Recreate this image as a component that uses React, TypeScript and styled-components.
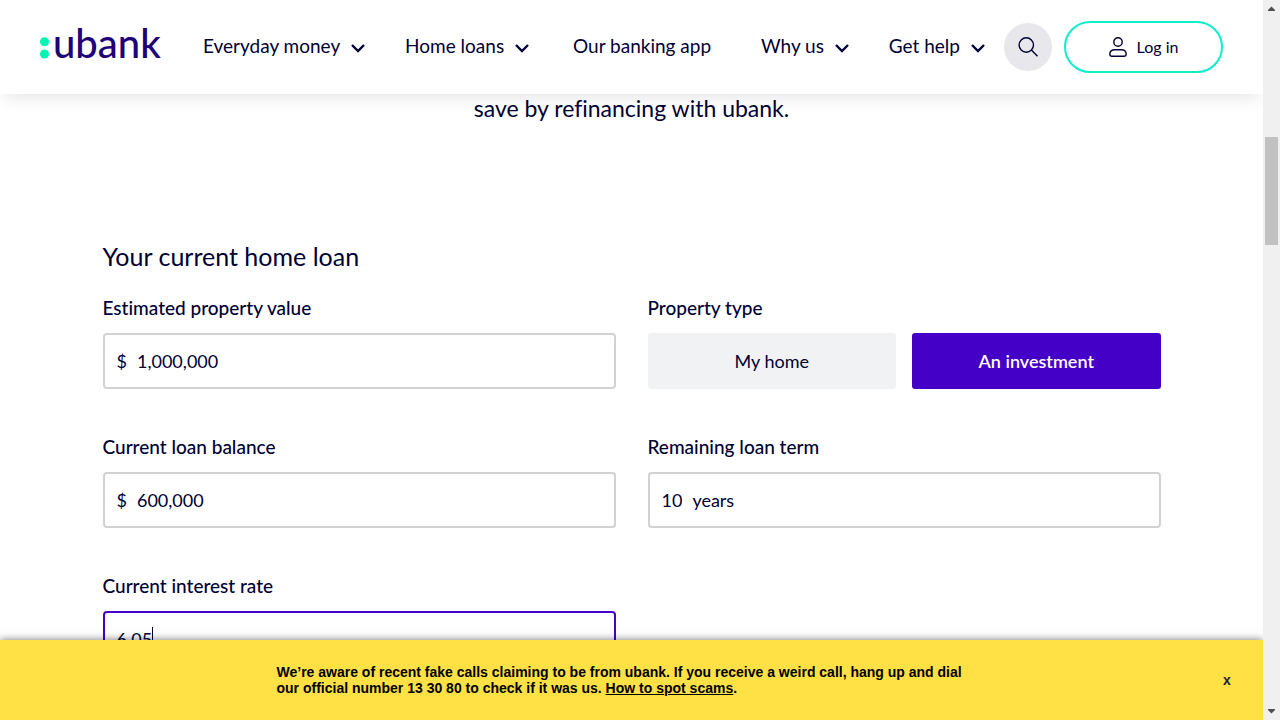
import React, { useState } from "react";
import styled, { createGlobalStyle } from "styled-components";

const ink = "#000033";
const violet = "#4500c8";
const mint = "#0eeecb";

const GlobalStyle = createGlobalStyle`
  *, *::before, *::after { box-sizing: border-box; }
  body {
    margin: 0;
    background: #fff;
    color: ${ink};
    font-family: Lato, "Open Sans", sans-serif;
    font-variant-ligatures: none;
  }
  button, input { font: inherit; color: inherit; font-variant-ligatures: none; }
`;

const Shell = styled.div`
  display: flex;
  height: 100vh;
  overflow: hidden;
`;

const Page = styled.div`
  flex: 1;
  min-width: 0;
  display: flex;
  flex-direction: column;
  overflow: hidden;
`;

const Header = styled.header`
  position: relative;
  z-index: 2;
  flex: none;
  display: flex;
  align-items: center;
  height: 94px;
  padding: 0 40px;
  background: #fff;
  box-shadow: 0 8px 16px -4px rgba(0, 0, 40, 0.1);
`;

const Logo = styled.a`
  display: flex;
  align-items: center;
  gap: 4px;
  width: 163px;
  color: #1e0078;
  font-size: 40px;
  font-weight: 500;
  line-height: 48px;
  padding-bottom: 8px;
  text-decoration: none;
`;

const LogoDots = styled.svg`
  flex: none;
  width: 9px;
  height: 22px;
  margin-top: 10px;
`;

const Nav = styled.nav`
  flex: 1;
  display: flex;
  align-items: center;
  justify-content: space-between;
  margin-right: 19px;
  padding-bottom: 2px;
`;

const NavLink = styled.a`
  font-size: 19px;
  line-height: 24px;
  color: ${ink};
  text-decoration: none;
  white-space: nowrap;
  padding: 0 10px 0 4px;
`;

const NavButton = styled.button`
  display: flex;
  align-items: center;
  gap: 11px;
  padding: 0;
  border: 0;
  background: none;
  font-size: 19px;
  line-height: 24px;
  white-space: nowrap;

  svg { margin-top: 3px; }
`;

const SearchButton = styled.button`
  display: grid;
  place-items: center;
  width: 48px;
  height: 48px;
  margin-right: 12px;
  padding: 0;
  border: 0;
  border-radius: 50%;
  background: #e8e8ec;
`;

const LoginButton = styled.button`
  display: flex;
  align-items: center;
  justify-content: center;
  gap: 10px;
  width: 159px;
  height: 52px;
  padding: 0;
  border: 2px solid ${mint};
  border-radius: 26px;
  background: #fff;
  font-size: 16px;
  line-height: 24px;
`;

const Main = styled.main`
  flex: 1;
  min-height: 0;
  overflow: hidden;
`;

const Intro = styled.p`
  margin: 0 0 116px;
  text-align: center;
  font-size: 23px;
  line-height: 28px;
`;

const Form = styled.form`
  max-width: 1058px;
  margin: 0 auto;
`;

const Title = styled.h2`
  margin: 0 0 20px;
  font-size: 25px;
  line-height: 36px;
  font-weight: 400;
`;

const FieldGrid = styled.div`
  display: grid;
  grid-template-columns: 1fr 1fr;
  gap: 44px 32px;
`;

const Field = styled.div`
  min-width: 0;
`;

const Label = styled.label`
  display: block;
  margin-bottom: 11px;
  font-size: 19px;
  line-height: 28px;
  font-weight: 500;
`;

const InputBox = styled.div<{ $active?: boolean }>`
  display: flex;
  align-items: center;
  gap: 10px;
  height: 56px;
  padding: 0 12px;
  border: 2px solid ${(p) => (p.$active ? violet : "#d2d2d2")};
  border-radius: 4px;
  background: #fff;
  font-size: 18px;
  line-height: 24px;
`;

const Input = styled.input<{ $fit?: boolean }>`
  ${(p) => (p.$fit ? "field-sizing: content;" : "flex: 1;")}
  min-width: 0;
  padding: 0;
  border: 0;
  outline: 0;
  background: none;
`;

const Editing = styled.span`
  display: flex;
  align-items: center;
`;

const Caret = styled.span`
  width: 1px;
  height: 24px;
  background: ${ink};
`;

const Choices = styled.div`
  display: grid;
  grid-template-columns: 1fr 1fr;
  gap: 16px;
`;

const Choice = styled.button<{ $selected: boolean }>`
  height: 56px;
  border: 0;
  border-radius: 3px;
  font-size: 18px;
  line-height: 24px;
  font-weight: ${(p) => (p.$selected ? 600 : 400)};
  color: ${(p) => (p.$selected ? "#fff" : ink)};
  background: ${(p) => (p.$selected ? violet : "#f1f2f4")};
`;

const Banner = styled.aside`
  position: relative;
  z-index: 2;
  flex: none;
  display: flex;
  align-items: center;
  justify-content: center;
  min-height: 80px;
  background: #ffe146;
  box-shadow: 0 0 8px rgba(0, 0, 0, 0.55);
  color: #000;
  font-family: "Liberation Sans", Arial, sans-serif;
  font-weight: 700;
`;

const Notice = styled.p`
  width: 710px;
  margin: 0;
  font-size: 14px;
  line-height: 16px;

  a { color: inherit; }
`;

const Close = styled.button`
  position: absolute;
  right: 24px;
  top: 28px;
  width: 24px;
  height: 24px;
  padding: 0;
  border: 0;
  background: none;
  color: #223;
  font-size: 14px;
  font-weight: 700;
  line-height: 24px;
`;

const Track = styled.div`
  flex: none;
  display: flex;
  flex-direction: column;
  justify-content: space-between;
  align-items: center;
  width: 17px;
  background: #f0f0f0;
`;

const Thumb = styled.div`
  width: 13px;
  height: 15%;
  margin: 120px 0 auto;
  background: #c1c1c1;
`;

const Arrow = ({ down }: { down?: boolean }) => (
  <svg width="17" height="17" viewBox="0 0 17 17" aria-hidden="true">
    <path d={down ? "M5 6h7v1L8.5 10.5 5 7z" : "M5 11h7v-1L8.5 6.5 5 10z"} fill="#505050" />
  </svg>
);

const Chevron = () => (
  <svg width="14" height="10" viewBox="0 0 14 10" fill="none" aria-hidden="true">
    <path d="M1 2 7 8 13 2" stroke="#00003c" strokeWidth="2.4" />
  </svg>
);

const SearchIcon = () => (
  <svg width="20" height="20" viewBox="0 0 20 20" fill="none" stroke={ink} strokeWidth="1.4" aria-hidden="true">
    <circle cx="8.3" cy="8" r="7.2" />
    <path d="M13.4 13.1 19.5 19.2" />
  </svg>
);

const UserIcon = () => (
  <svg width="18" height="20" viewBox="0 0 18 20" fill="none" stroke={ink} strokeWidth="1.4" aria-hidden="true">
    <circle cx="9" cy="5" r="4.2" />
    <path d="M5.5 12.7h7c2.6 0 4.7 1.7 4.7 4.2 0 1.5-.9 2.3-2.2 2.3H3c-1.3 0-2.2-.8-2.2-2.3 0-2.5 2.1-4.2 4.7-4.2z" />
  </svg>
);

const Menu = ({ children }: { children: React.ReactNode }) => (
  <NavButton type="button">
    {children}
    <Chevron />
  </NavButton>
);

export default function App() {
  const [type, setType] = useState("An investment");

  return (
    <>
      <GlobalStyle />
      <Shell>
        <Page>
          <Header>
            <Logo href="#">
              <LogoDots viewBox="0 0 9 22" aria-hidden="true">
                <circle cx="4.5" cy="4.8" r="4.5" fill="#00f5b4" />
                <circle cx="4.5" cy="17" r="4.5" fill="#00f5b4" />
              </LogoDots>
              <span>ubank</span>
            </Logo>
            <Nav>
              <Menu>Everyday money</Menu>
              <Menu>Home loans</Menu>
              <NavLink href="#">Our banking app</NavLink>
              <Menu>Why us</Menu>
              <Menu>Get help</Menu>
            </Nav>
            <SearchButton type="button" aria-label="Search">
              <SearchIcon />
            </SearchButton>
            <LoginButton type="button">
              <UserIcon />
              Log in
            </LoginButton>
          </Header>
          <Main>
            <Intro>save by refinancing with ubank.</Intro>
            <Form>
              <Title>Your current home loan</Title>
              <FieldGrid>
                <Field>
                  <Label htmlFor="value">Estimated property value</Label>
                  <InputBox>
                    <span>$</span>
                    <Input id="value" defaultValue="1,000,000" />
                  </InputBox>
                </Field>
                <Field>
                  <Label as="div" id="type">Property type</Label>
                  <Choices role="group" aria-labelledby="type">
                    {["My home", "An investment"].map((name) => (
                      <Choice
                        key={name}
                        type="button"
                        aria-pressed={type === name}
                        $selected={type === name}
                        onClick={() => setType(name)}
                      >
                        {name}
                      </Choice>
                    ))}
                  </Choices>
                </Field>
                <Field>
                  <Label htmlFor="balance">Current loan balance</Label>
                  <InputBox>
                    <span>$</span>
                    <Input id="balance" defaultValue="600,000" />
                  </InputBox>
                </Field>
                <Field>
                  <Label htmlFor="term">Remaining loan term</Label>
                  <InputBox>
                    <Input id="term" $fit defaultValue="10" />
                    <span>years</span>
                  </InputBox>
                </Field>
                <Field>
                  <Label htmlFor="rate">Current interest rate</Label>
                  <InputBox $active>
                    <Editing>
                      <Input id="rate" $fit defaultValue="6.05" />
                      <Caret />
                    </Editing>
                  </InputBox>
                </Field>
              </FieldGrid>
            </Form>
          </Main>
          <Banner>
            <Notice>
              We’re aware of recent fake calls claiming to be from ubank. If you receive a weird call, hang up and dial
              our official number 13 30 80 to check if it was us. <a href="#">How to spot scams</a>.
            </Notice>
            <Close type="button" aria-label="Close">x</Close>
          </Banner>
        </Page>
        <Track>
          <Arrow />
          <Thumb />
          <Arrow down />
        </Track>
      </Shell>
    </>
  );
}
